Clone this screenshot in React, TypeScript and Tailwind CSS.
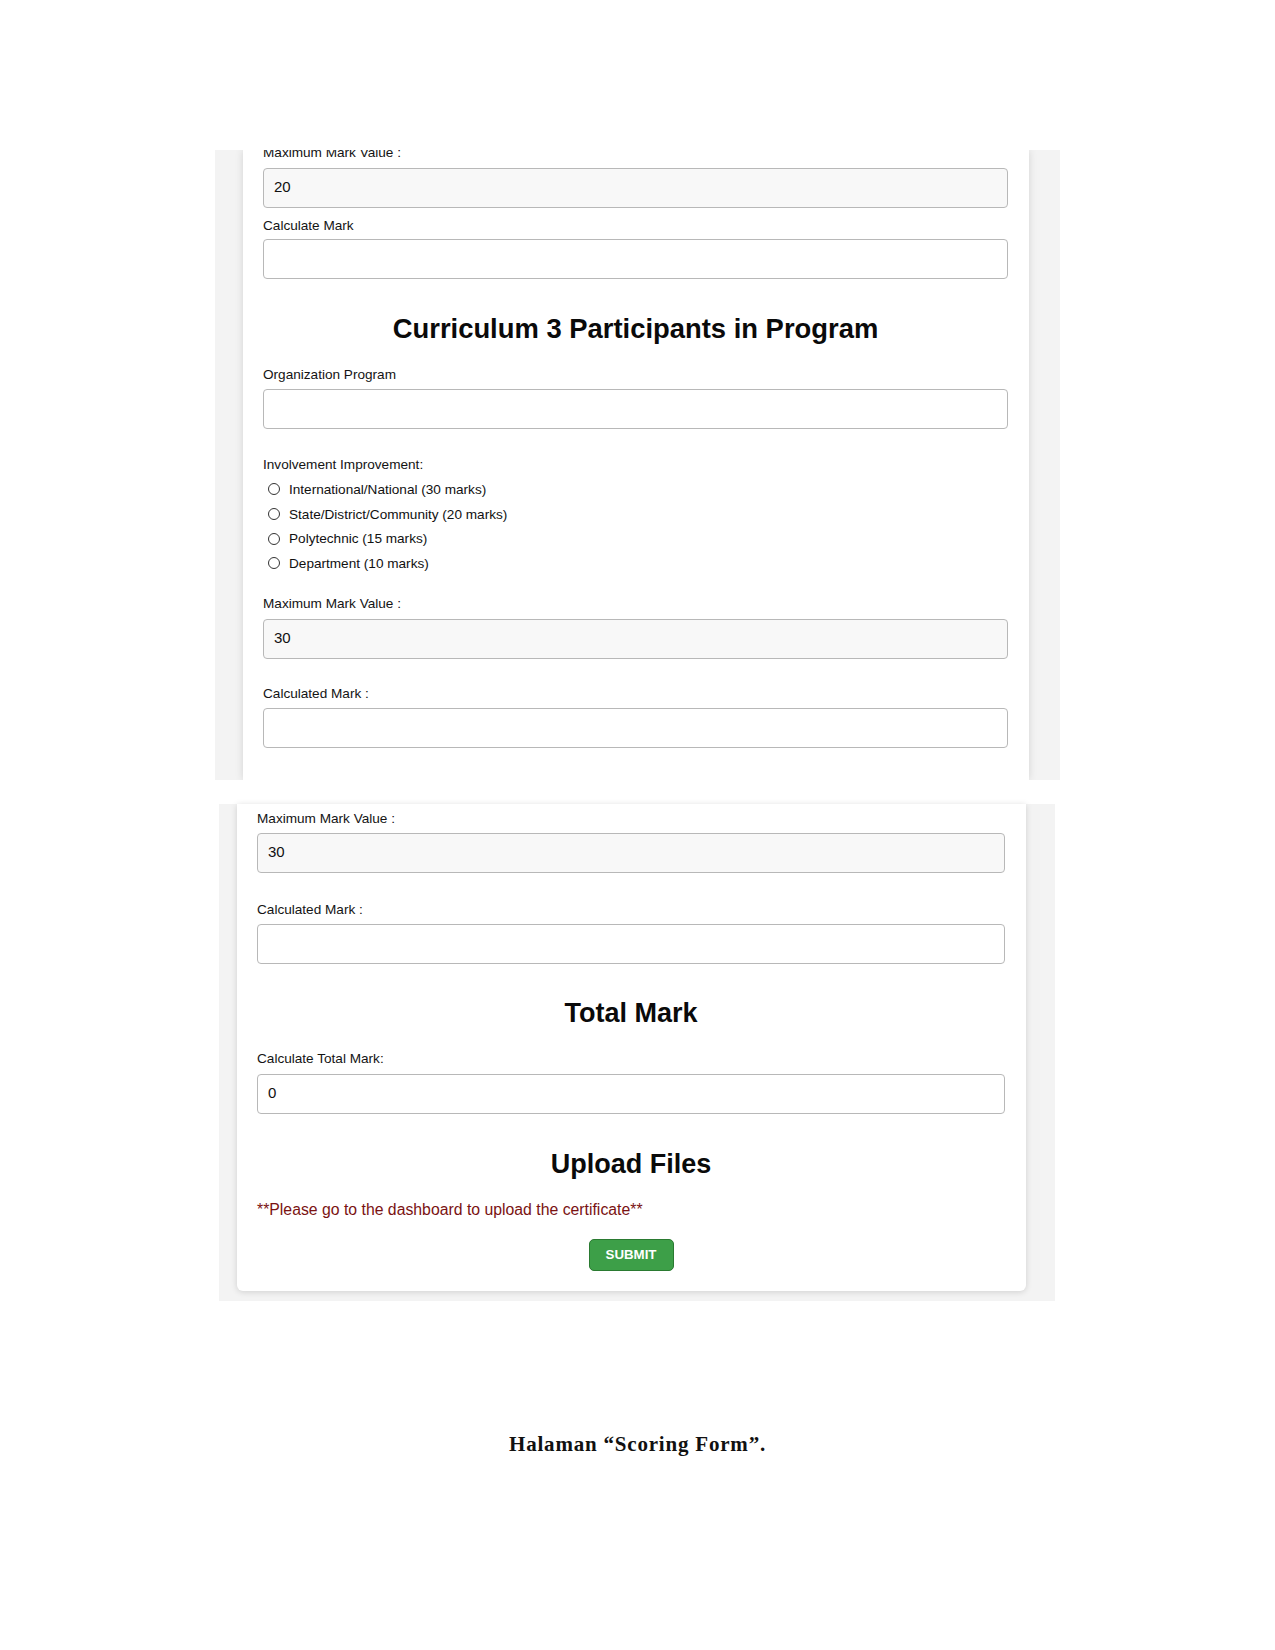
import React from "react";

const Label = ({ children, className = "" }: { children: React.ReactNode; className?: string }) => (
  <div className={"text-[13.6px] leading-[16px] text-[#141414] " + className}>{children}</div>
);

const Field = ({ value = "", filled = false, className = "" }: { value?: string; filled?: boolean; className?: string }) => (
  <input
    readOnly
    defaultValue={value}
    className={
      "block w-full h-[40px] rounded-[4px] border border-[#b8b8b8] pl-[10px] pb-[3px] text-[15px] text-[#111] outline-none " +
      (filled ? "bg-[#f8f8f8] " : "bg-white ") +
      className
    }
  />
);

const Radio = ({ label }: { label: string }) => (
  <label className="flex items-center h-[24.67px] pl-[5px] text-[13.6px] text-[#111]">
    <span className="w-[12px] h-[12px] rounded-full border border-[#333] bg-white shrink-0 -mt-[2px]" />
    <span className="ml-[9px]">{label}</span>
  </label>
);

export default function App() {
  return (
    <div className="min-h-[1650px] bg-white font-['Liberation_Sans',Arial,sans-serif] pt-[150px]">
      {/* First screenshot */}
      <div className="ml-[215px] w-[845px] h-[630px] bg-[#f3f3f3] pl-[28px] pr-[31px] overflow-hidden">
        <div className="h-full bg-white shadow-[0_0_8px_rgba(0,0,0,0.13)] pl-[20px] pr-[21px] flex flex-col">
          <Label className="mt-[-5px]">Maximum Mark Value :</Label>
          <Field value="20" filled className="mt-[7px]" />
          <Label className="mt-[10px]">Calculate Mark</Label>
          <Field className="mt-[5px]" />
          <h2 className="mt-[34px] text-[27.4px] leading-[32px] font-bold text-center text-[#0a0a0a]">
            Curriculum 3 Participants in Program
          </h2>
          <Label className="mt-[22px]">Organization Program</Label>
          <Field className="mt-[6px]" />
          <Label className="mt-[28px]">Involvement Improvement:</Label>
          <div className="mt-[5px] flex flex-col">
            <Radio label="International/National (30 marks)" />
            <Radio label="State/District/Community (20 marks)" />
            <Radio label="Polytechnic (15 marks)" />
            <Radio label="Department (10 marks)" />
          </div>
          <Label className="mt-[19px]">Maximum Mark Value :</Label>
          <Field value="30" filled className="mt-[7px]" />
          <Label className="mt-[27px]">Calculated Mark :</Label>
          <Field className="mt-[6px]" />
        </div>
      </div>

      {/* Second screenshot */}
      <div className="mt-[24px] ml-[219px] w-[836px] bg-[#f3f3f3] pl-[18px] pr-[29px] pb-[10px]">
        <div className="bg-white rounded-b-[6px] shadow-[0_1px_6px_rgba(0,0,0,0.15)] pl-[20px] pr-[21px] pt-[7px] pb-[20px] flex flex-col">
          <Label>Maximum Mark Value :</Label>
          <Field value="30" filled className="mt-[6px]" />
          <Label className="mt-[29px]">Calculated Mark :</Label>
          <Field className="mt-[6px]" />
          <h2 className="mt-[33px] text-[27px] leading-[32px] font-bold text-center text-[#0a0a0a]">Total Mark</h2>
          <Label className="mt-[22px]">Calculate Total Mark:</Label>
          <Field value="0" className="mt-[7px]" />
          <h2 className="mt-[34px] text-[27px] leading-[32px] font-bold text-center text-[#0a0a0a]">Upload Files</h2>
          <p className="mt-[20px] text-[15.8px] leading-[20px] text-[#7a1212]">
            **Please go to the dashboard to upload the certificate**
          </p>
          <button className="mt-[19px] self-center w-[85px] h-[32px] rounded-[5px] bg-[#3d9f48] border border-[#2a7a31] text-white text-[13.3px] font-bold">
            SUBMIT
          </button>
        </div>
      </div>

      {/* Caption */}
      <p className="mt-[129px] text-center font-['Liberation_Serif','Times_New_Roman',serif] font-bold text-[21px] leading-[28px] tracking-[0.8px] text-[#111]">
        Halaman “Scoring Form”.
      </p>
    </div>
  );
}
